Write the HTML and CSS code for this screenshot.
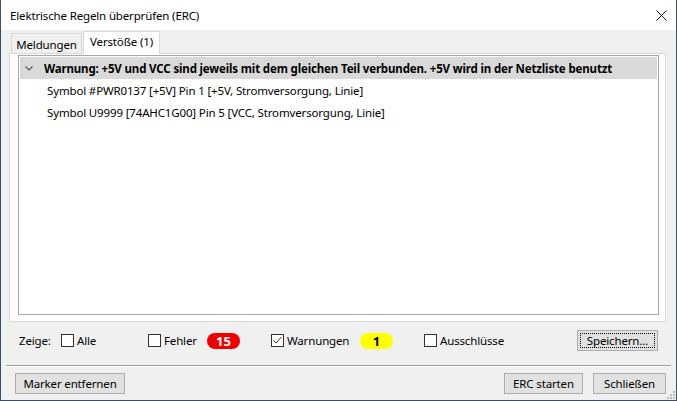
FILE: index.html
```html
<!DOCTYPE html>
<html lang="de">
<head>
<meta charset="utf-8">
<title>Elektrische Regeln überprüfen (ERC)</title>
<link rel="stylesheet" href="styles.css">
</head>
<body>
<div class="window">
  <div class="titlebar">
    <span class="title">Elektrische Regeln überprüfen (ERC)</span>
    <svg class="close" width="11" height="11" viewBox="0 0 11 11"><path d="M0.5 0.5 L10.5 10.5 M10.5 0.5 L0.5 10.5" stroke="#111" stroke-width="1" fill="none"/></svg>
  </div>
  <div class="client">
    <div class="tabstrip">
      <div class="tab">Meldungen</div>
      <div class="tab tab-active">Verstöße (1)</div>
    </div>
    <div class="panel">
      <div class="list">
        <div class="row row-head">
          <svg class="chev" width="8" height="5" viewBox="0 0 8 5"><path d="M0.5 0.5 L4 4 L7.5 0.5" stroke="#555" stroke-width="1.2" fill="none"/></svg>
          <span>Warnung: +5V und VCC sind jeweils mit dem gleichen Teil verbunden. +5V wird in der Netzliste benutzt</span>
        </div>
        <div class="row row-item">Symbol #PWR0137 [+5V] Pin 1 [+5V, Stromversorgung, Linie]</div>
        <div class="row row-item">Symbol U9999 [74AHC1G00] Pin 5 [VCC, Stromversorgung, Linie]</div>
      </div>
    </div>
    <div class="filters">
      <span class="f-label">Zeige:</span>
      <label class="f-item f-alle"><span class="cb"></span>Alle</label>
      <label class="f-item f-fehler"><span class="cb"></span>Fehler</label>
      <span class="badge badge-red">15</span>
      <label class="f-item f-warn"><span class="cb cb-checked"><svg width="11" height="11" viewBox="0 0 11 11"><path d="M1.5 5.5 L4 8 L9.5 2" stroke="#333" stroke-width="1" fill="none"/></svg></span>Warnungen</label>
      <span class="badge badge-yellow">1</span>
      <label class="f-item f-aus"><span class="cb"></span>Ausschlüsse</label>
      <button class="btn btn-save"><span class="focus">Speichern...</span></button>
    </div>
    <div class="separator"></div>
    <div class="actions">
      <button class="btn btn-marker">Marker entfernen</button>
      <button class="btn btn-erc">ERC starten</button>
      <button class="btn btn-close">Schließen</button>
    </div>
    <svg class="grip" width="10" height="10" viewBox="0 0 10 10">
      <rect x="7" y="1" width="2" height="2" fill="#bcbcbc"/>
      <rect x="4" y="4" width="2" height="2" fill="#bcbcbc"/>
      <rect x="7" y="4" width="2" height="2" fill="#bcbcbc"/>
      <rect x="1" y="7" width="2" height="2" fill="#bcbcbc"/>
      <rect x="4" y="7" width="2" height="2" fill="#bcbcbc"/>
      <rect x="7" y="7" width="2" height="2" fill="#bcbcbc"/>
    </svg>
  </div>
</div>
</body>
</html>
```
FILE: styles.css
```css
* { box-sizing: border-box; }
html, body { margin: 0; padding: 0; }
body {
  font-family: "Noto Sans", "Open Sans", sans-serif;
  font-size: 11.5px;
  letter-spacing: -0.15px;
  color: #000;
  background: #f0f0f0;
}
.window {
  width: 677px;
  height: 401px;
  display: flex;
  flex-direction: column;
  border: 1px solid #34526f;
  border-top: none;
}
.titlebar {
  height: 30px;
  background: #fff;
  display: flex;
  align-items: center;
  padding-left: 9px;
  padding-right: 9px;
}
.title { flex: 1; }
.close { display: block; }
.client {
  flex: 1;
  position: relative;
  background: #f0f0f0;
  display: flex;
  flex-direction: column;
  padding: 1px 10px 0 8px;
}
.tabstrip {
  height: 23px;
  margin-bottom: -1px;
  padding-left: 2px;
  display: flex;
  align-items: flex-end;
  position: relative;
  z-index: 1;
}
.tab {
  height: 20px;
  width: 71px;
  margin-bottom: 1px;
  margin-right: 1px;
  border: 1px solid #d9d9d9;
  border-bottom: none;
  display: flex;
  align-items: center;
  justify-content: center;
  padding-top: 1px;
}
.tab-active {
  height: 23px;
  width: 77px;
  margin-bottom: 0;
  background: #fff;
  padding-top: 0;
  padding-bottom: 4px;
}
.panel {
  height: 269px;
  background: #fff;
  border: 1px solid #d9d9d9;
  padding: 1px 6px 6px 8px;
  display: flex;
}
.list {
  flex: 1;
  border: 1px solid #a9a9a9;
  padding: 1px;
}
.row {
  height: 22px;
  display: flex;
  align-items: center;
  white-space: nowrap;
}
.row-head {
  background: #d9d9d9;
  font-weight: bold;
  padding-left: 5px;
}
.chev { margin-right: 11px; }
.row-item { padding-left: 27px; }
.filters {
  margin-top: 8px;
  height: 21px;
  display: flex;
  align-items: center;
  padding-left: 10px;
  padding-right: 8px;
}
.f-label { width: 42px; }
.f-item { display: flex; align-items: center; }
.f-alle { width: 87px; }
.f-fehler { width: 59px; }
.f-warn { width: 89px; }
.cb {
  width: 13px;
  height: 13px;
  border: 1px solid #333;
  background: #fff;
  margin-right: 3px;
  display: flex;
  align-items: center;
  justify-content: center;
}
.cb svg { display: block; }
.badge {
  height: 16px;
  width: 33px;
  border-radius: 8px;
  display: flex;
  align-items: center;
  justify-content: center;
  font-weight: bold;
  font-size: 13px;
  letter-spacing: 0;
  margin-right: 31px;
}
.badge-red { background: #f20000; color: #fff; }
.badge-yellow { background: #ffff00; color: #000; }
.btn {
  height: 21px;
  background: #e1e1e1;
  border: 1px solid #adadad;
  font-family: inherit;
  font-size: 11.5px;
  letter-spacing: -0.15px;
  color: #000;
  padding: 0;
  display: flex;
  align-items: center;
  justify-content: center;
}
.btn-save {
  margin-left: auto;
  width: 81px;
  padding: 2px;
}
.focus {
  flex: 1;
  align-self: stretch;
  display: flex;
  align-items: center;
  justify-content: center;
  border: 1px dotted #000;
}
.separator {
  margin: 14px -5px 0 -3px;
  border-top: 1px solid #a0a0a0;
  border-bottom: 1px solid #fff;
}
.actions {
  margin-top: 6px;
  display: flex;
  align-items: center;
  padding-left: 6px;
}
.btn-marker { width: 110px; }
.btn-erc { width: 79px; margin-left: auto; margin-right: 10px; }
.btn-close { width: 73px; }
.grip {
  position: absolute;
  right: 0;
  bottom: 0;
}
```
